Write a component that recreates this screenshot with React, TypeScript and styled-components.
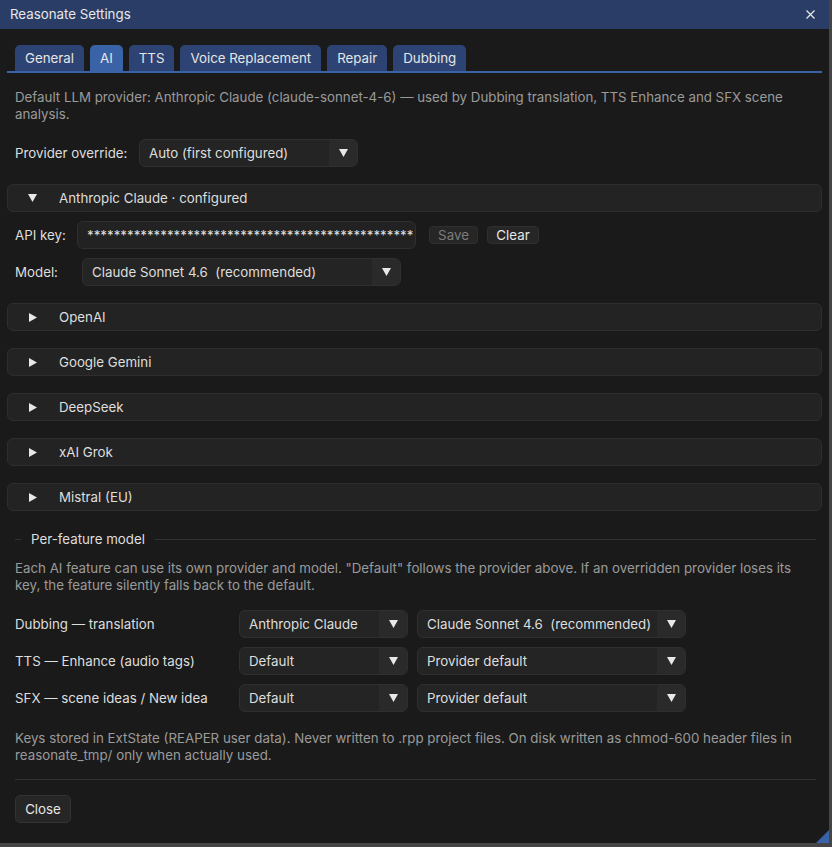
import React from 'react';
import styled, { createGlobalStyle } from 'styled-components';

const GlobalStyle = createGlobalStyle`
  html, body {
    margin: 0;
    padding: 0;
    background: #454545;
  }
  * {
    box-sizing: border-box;
  }
`;

const Window = styled.div`
  position: relative;
  width: 829px;
  height: 843px;
  background: #1a1a1a;
  font-family: Inter, 'Noto Sans', sans-serif;
  font-size: 13.3px;
  line-height: 17px;
  color: #dedede;
  display: flex;
  flex-direction: column;
  overflow: hidden;
`;

const TitleBar = styled.div`
  height: 29px;
  flex: none;
  background: #293d66;
  display: flex;
  align-items: center;
  justify-content: space-between;
  padding: 0 14px 0 10px;
  color: #e8e8e8;
`;

const Body = styled.div`
  display: flex;
  flex-direction: column;
  padding: 0 7px;
`;

const TabBar = styled.div`
  margin-top: 16px;
  display: flex;
  gap: 6px;
  padding-left: 8px;
  border-bottom: 2px solid #3a62a6;
`;

const Tab = styled.div<{ $active?: boolean }>`
  height: 26px;
  padding: 0 10px;
  display: flex;
  align-items: center;
  border-radius: 5px 5px 0 0;
  background: ${(p) => (p.$active ? '#3a62a6' : '#2d4373')};
  color: #e6e6e6;
`;

const Note = styled.p<{ $mt: number }>`
  margin: ${(p) => p.$mt}px 8px 0;
  color: #9a9a9a;
  white-space: nowrap;
`;

const Row = styled.div<{ $mt: number }>`
  margin-top: ${(p) => p.$mt}px;
  padding-left: 8px;
  display: flex;
  align-items: center;
`;

const Label = styled.span<{ $w: number }>`
  width: ${(p) => p.$w}px;
  flex: none;
  padding-top: 1px;
`;

const ComboBox = styled.div<{ $w: number; $ml?: number }>`
  width: ${(p) => p.$w}px;
  margin-left: ${(p) => p.$ml || 0}px;
  height: 28px;
  flex: none;
  display: flex;
  background: #242424;
  border: 1px solid #2f2f2f;
  border-radius: 6px;
  overflow: hidden;
`;

const ComboValue = styled.span`
  flex: 1;
  padding: 1px 0 0 9px;
  display: flex;
  align-items: center;
  white-space: pre;
`;

const ComboArrow = styled.span`
  width: 28px;
  flex: none;
  display: flex;
  align-items: center;
  justify-content: center;
  background: #2a2a2a;
`;

const Header = styled.div<{ $mt: number }>`
  margin-top: ${(p) => p.$mt}px;
  height: 28px;
  display: flex;
  align-items: center;
  padding-left: 20px;
  background: #232323;
  border: 1px solid #2e2e2e;
  border-radius: 6px;
`;

const HeaderArrow = styled.span`
  width: 9px;
  margin-right: 22px;
  display: flex;
  justify-content: center;
`;

const KeyInput = styled.div`
  width: 339px;
  height: 28px;
  flex: none;
  padding: 0 9px;
  display: flex;
  align-items: center;
  background: #222222;
  border: 1px solid #2f2f2f;
  border-radius: 6px;
  overflow: hidden;
  white-space: nowrap;
`;

const SmallButton = styled.button<{ $w: number; $ml: number; $disabled?: boolean }>`
  width: ${(p) => p.$w}px;
  margin-left: ${(p) => p.$ml}px;
  height: 18px;
  padding: 0;
  font: inherit;
  line-height: 16px;
  color: ${(p) => (p.$disabled ? '#7c7c7c' : '#e6e6e6')};
  background: #262626;
  border: 1px solid #2f2f2f;
  border-radius: 4px;
`;

const SectionTitle = styled.div`
  margin-top: 20px;
  padding-left: 8px;
  padding-right: 6px;
  display: flex;
  align-items: center;
  gap: 10px;
`;

const Line = styled.span<{ $w?: number }>`
  height: 1px;
  background: #333333;
  ${(p) => (p.$w ? `width: ${p.$w}px;` : 'flex: 1;')}
`;

const Rule = styled.div`
  margin: 15px 6px 0 8px;
  height: 1px;
  background: #323232;
`;

const CloseButton = styled.button`
  margin: 15px 0 0 8px;
  width: 56px;
  height: 28px;
  font: inherit;
  color: #e6e6e6;
  background: #262626;
  border: 1px solid #333333;
  border-radius: 5px;
  align-self: flex-start;
`;

const ResizeGrip = styled.div`
  position: absolute;
  right: 0;
  bottom: 0;
  width: 13px;
  height: 13px;
  background: #3a62a6;
  clip-path: polygon(100% 0, 100% 100%, 0 100%);
`;

const DownArrow = () => (
  <svg width="9" height="8" viewBox="0 0 9 8">
    <polygon points="0,0 9,0 4.5,8" fill="#e8e8e8" />
  </svg>
);

const RightArrow = () => (
  <svg width="8" height="9" viewBox="0 0 8 9">
    <polygon points="0,0 8,4.5 0,9" fill="#e8e8e8" />
  </svg>
);

const CloseIcon = () => (
  <svg width="9" height="9" viewBox="0 0 9 9">
    <path d="M0.5 0.5 L8.5 8.5 M8.5 0.5 L0.5 8.5" stroke="#e8e8e8" strokeWidth="1.2" />
  </svg>
);

type ComboProps = { value: string; width: number; ml?: number };

function Combo({ value, width, ml }: ComboProps) {
  return (
    <ComboBox $w={width} $ml={ml}>
      <ComboValue>{value}</ComboValue>
      <ComboArrow>
        <DownArrow />
      </ComboArrow>
    </ComboBox>
  );
}

const tabs = ['General', 'AI', 'TTS', 'Voice Replacement', 'Repair', 'Dubbing'];
const providers = ['OpenAI', 'Google Gemini', 'DeepSeek', 'xAI Grok', 'Mistral (EU)'];
const features = [
  { name: 'Dubbing — translation', provider: 'Anthropic Claude', model: 'Claude Sonnet 4.6  (recommended)' },
  { name: 'TTS — Enhance (audio tags)', provider: 'Default', model: 'Provider default' },
  { name: 'SFX — scene ideas / New idea', provider: 'Default', model: 'Provider default' },
];

export default function App() {
  return (
    <>
      <GlobalStyle />
      <Window>
        <TitleBar>
          <span>Reasonate Settings</span>
          <CloseIcon />
        </TitleBar>
        <Body>
          <TabBar>
            {tabs.map((t) => (
              <Tab key={t} $active={t === 'AI'}>
                {t}
              </Tab>
            ))}
          </TabBar>

          <Note $mt={16}>
            Default LLM provider: Anthropic Claude (claude-sonnet-4-6) — used by Dubbing translation, TTS Enhance and SFX scene
            <br />
            analysis.
          </Note>

          <Row $mt={16}>
            <Label $w={124}>Provider override:</Label>
            <Combo value="Auto (first configured)" width={219} />
          </Row>

          <Header $mt={17}>
            <HeaderArrow>
              <DownArrow />
            </HeaderArrow>
            Anthropic Claude · configured
          </Header>

          <Row $mt={9}>
            <Label $w={62}>API key:</Label>
            <KeyInput>{'*'.repeat(49)}</KeyInput>
            <SmallButton $w={49} $ml={13} $disabled>
              Save
            </SmallButton>
            <SmallButton $w={52} $ml={9}>
              Clear
            </SmallButton>
          </Row>

          <Row $mt={9}>
            <Label $w={67}>Model:</Label>
            <Combo value="Claude Sonnet 4.6  (recommended)" width={319} />
          </Row>

          {providers.map((name) => (
            <Header key={name} $mt={17}>
              <HeaderArrow>
                <RightArrow />
              </HeaderArrow>
              {name}
            </Header>
          ))}

          <SectionTitle>
            <Line $w={6} />
            <span>Per-feature model</span>
            <Line />
          </SectionTitle>

          <Note $mt={12}>
            Each AI feature can use its own provider and model. "Default" follows the provider above. If an overridden provider loses its
            <br />
            key, the feature silently falls back to the default.
          </Note>

          {features.map((f, i) => (
            <Row key={f.name} $mt={i === 0 ? 16 : 9}>
              <Label $w={224}>{f.name}</Label>
              <Combo value={f.provider} width={169} />
              <Combo value={f.model} width={269} ml={9} />
            </Row>
          ))}

          <Note $mt={18}>
            Keys stored in ExtState (REAPER user data). Never written to .rpp project files. On disk written as chmod-600 header files in
            <br />
            reasonate_tmp/ only when actually used.
          </Note>

          <Rule />
          <CloseButton>Close</CloseButton>
        </Body>
        <ResizeGrip />
      </Window>
    </>
  );
}
